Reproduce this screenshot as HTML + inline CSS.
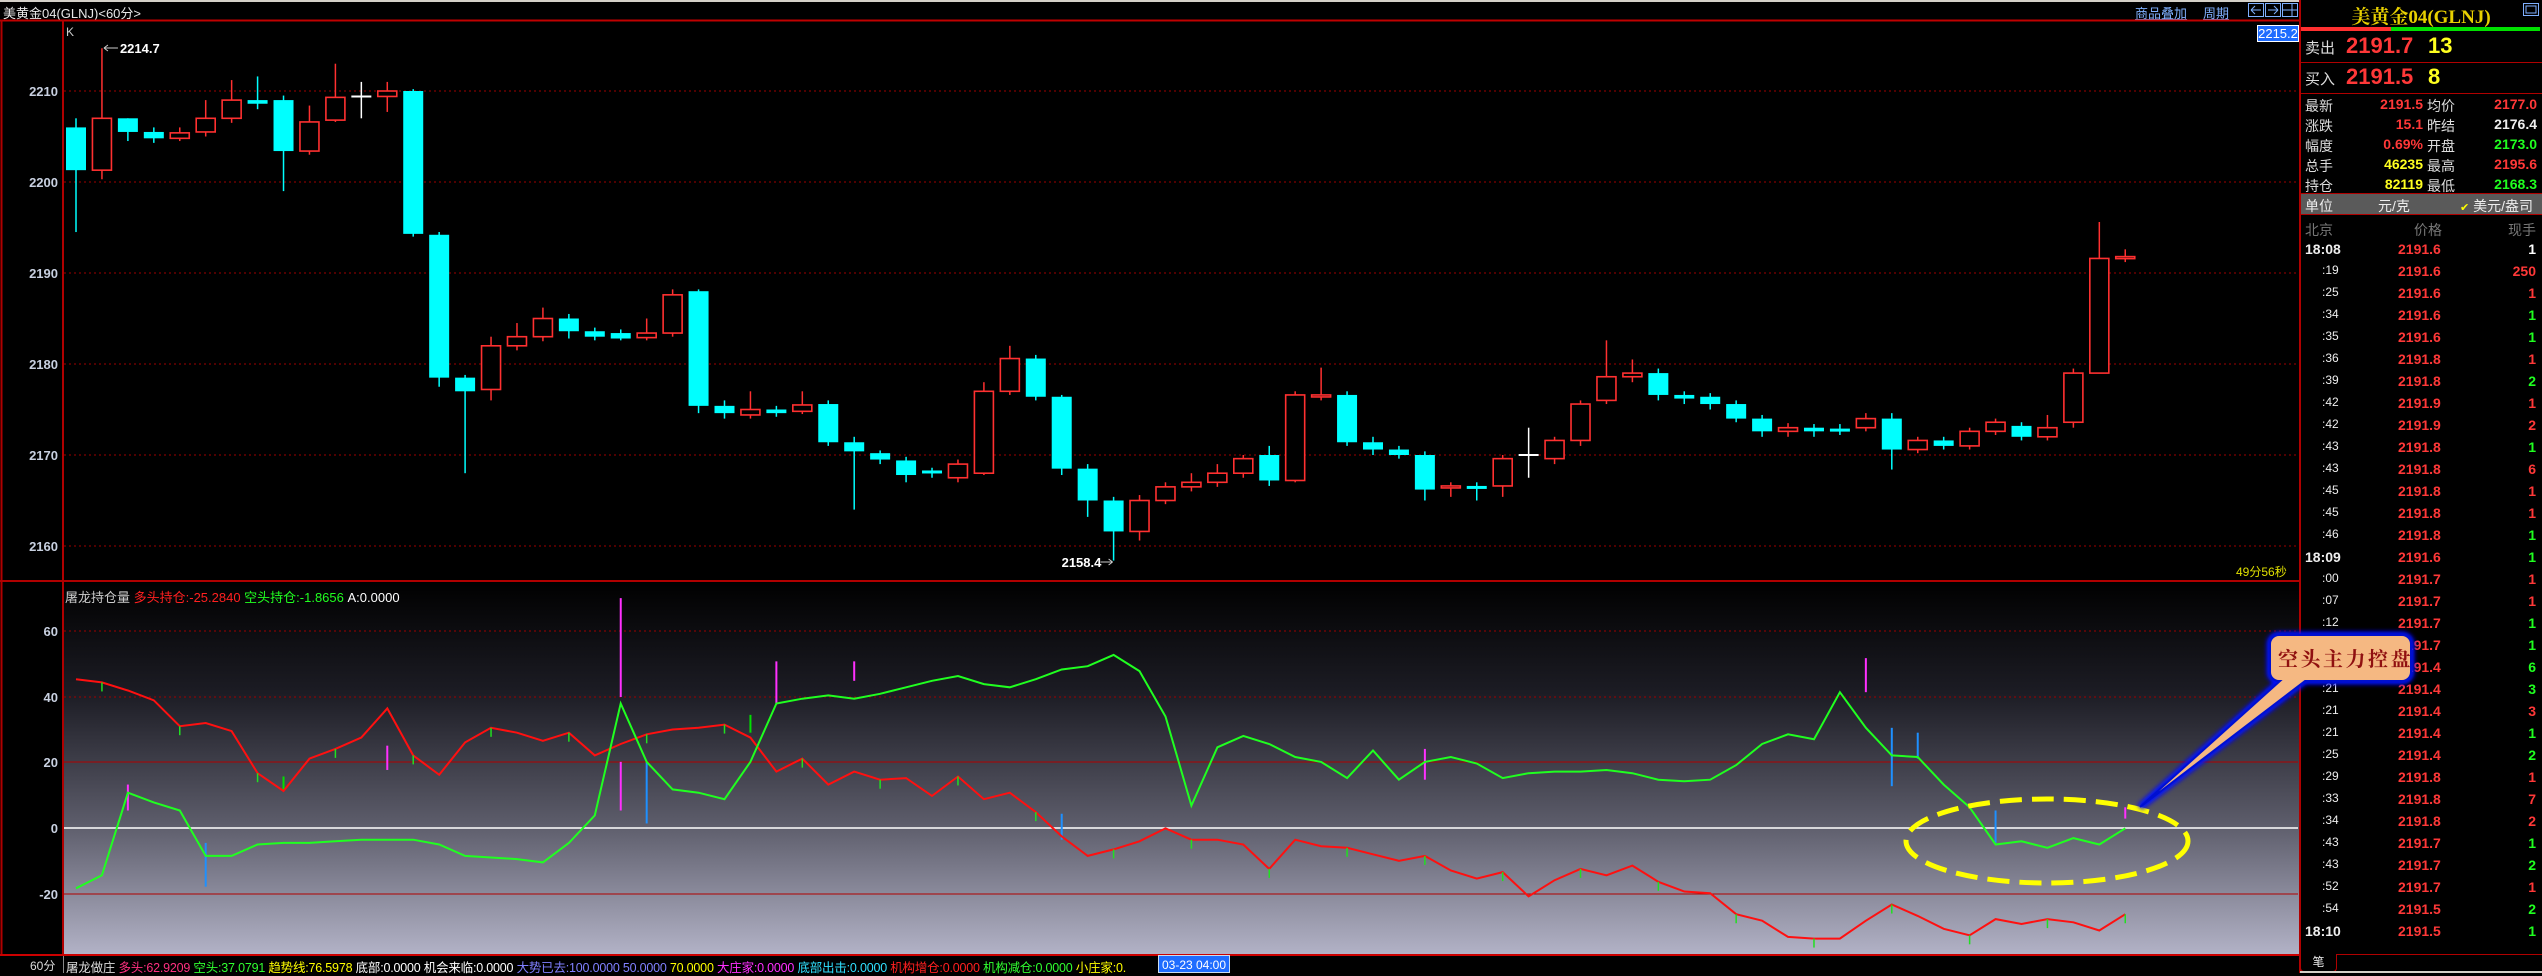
<!DOCTYPE html>
<html><head><meta charset="utf-8">
<style>
*{margin:0;padding:0;box-sizing:border-box}
body{width:2542px;height:973px;background:#000;overflow:hidden;position:relative;font-family:"Liberation Sans","Noto Sans CJK SC",sans-serif;color:#ddd}
.a{position:absolute;white-space:nowrap}
.rp{font-size:14px}
</style></head><body>
<div class="a" style="left:0;top:0;width:2542px;height:2px;background:#d4d0c8"></div>
<div class="a" style="left:3px;top:3px;font-size:13px;color:#e8e8e8">美黄金04(GLNJ)&lt;60分&gt;</div>
<div class="a" style="left:2135px;top:3px;font-size:13px;color:#7fb0ff;text-decoration:underline">商品叠加</div>
<div class="a" style="left:2203px;top:3px;font-size:13px;color:#7fb0ff;text-decoration:underline">周期</div>
<svg class="a" style="left:2248px;top:3px" width="52" height="15"><g fill="none" stroke="#7fb0ff" stroke-width="1"><rect x="0.5" y="0.5" width="15" height="13"/><rect x="17.5" y="0.5" width="15" height="13"/><rect x="34.5" y="0.5" width="15" height="13"/><path d="M3 7h10M3 7l4-4M3 7l4 4M20 7h10M30 7l-4-4M30 7l-4 4M35 7h14M44 1v13"/></g></svg>
<svg class="a" style="left:0;top:0" width="2300" height="973" id="main"></svg>
<div class="a" style="left:2257px;top:25px;width:42px;height:17px;background:#1e6cff;border:1px solid #fff;color:#fff;font-size:13px;line-height:15px;text-align:center">2215.2</div>
<div class="a" style="left:66px;top:25px;font-size:12px;color:#ccc">K</div>
<div class="a" style="left:2236px;top:563px;font-size:12px;color:#e0e000">49分56秒</div>
<div class="a" style="left:65px;top:587px;font-size:13px"><span style="color:#ccc">屠龙持仓量 </span><span style="color:#ff2020">多头持仓:-25.2840 </span><span style="color:#20ff20">空头持仓:-1.8656 </span><span style="color:#fff">A:0.0000</span></div>
<div class="a" style="left:0;top:955px;width:2300px;height:18px;background:#000"></div>
<div class="a" style="left:0;top:954px;width:2300px;height:2px;background:#c00"></div>
<div class="a" style="left:30px;top:957px;font-size:12px;color:#ddd">60分</div>
<div class="a" style="left:63px;top:956px;width:1px;height:17px;background:#888"></div>
<div class="a" style="left:66px;top:957px;font-size:12.5px;letter-spacing:-0.2px"><span style="color:#ddd">屠龙做庄 </span><span style="color:#ff3080">多头:62.9209 </span><span style="color:#30ff30">空头:37.0791 </span><span style="color:#ffff00">趋势线:76.5978 </span><span style="color:#fff">底部:0.0000 机会来临:0.0000 </span><span style="color:#8080ff">大势已去:100.0000 50.0000 </span><span style="color:#ffff00">70.0000 </span><span style="color:#ff30ff">大庄家:0.0000 </span><span style="color:#30e0ff">底部出击:0.0000 </span><span style="color:#ff2020">机构增仓:0.0000 </span><span style="color:#30ff30">机构减仓:0.0000 </span><span style="color:#ffff00">小庄家:0.</span></div>
<div class="a" style="left:1158px;top:955px;width:72px;height:18px;background:#1e6cff;color:#fff;font-size:12px;line-height:18px;text-align:center;border:1px solid #cde">03-23 04:00</div>
<div class="a" style="left:2299px;top:0;width:243px;height:973px;background:#000;border-left:2px solid #b00000"></div>
<div class="a" style="left:2300px;top:2px;width:242px;text-align:center;font-family:'Liberation Serif','Noto Serif CJK SC',serif;font-size:19px;color:#e8d000;font-weight:bold">美黄金04(GLNJ)</div>
<svg class="a" style="left:2523px;top:3px" width="17" height="13"><rect x="0.5" y="0.5" width="15" height="12" fill="none" stroke="#7fb0ff"/><rect x="3" y="3" width="10" height="7" fill="none" stroke="#7fb0ff"/></svg>
<div class="a" style="left:2301px;top:27px;width:90px;height:4px;background:#ff3030"></div>
<div class="a" style="left:2391px;top:27px;width:149px;height:4px;background:#00e000"></div>
<div class="a" style="left:2301px;top:62px;width:241px;height:1px;background:#b00000"></div>
<div class="a" style="left:2301px;top:93px;width:241px;height:1px;background:#b00000"></div>
<div class="a" style="left:2305px;top:37px;font-size:15px;color:#ddd">卖出</div>
<div class="a" style="left:2346px;top:33px;font-size:22px;font-weight:bold;color:#ff3838">2191.7</div>
<div class="a" style="left:2428px;top:33px;font-size:22px;font-weight:bold;color:#ffff20">13</div>
<div class="a" style="left:2305px;top:68px;font-size:15px;color:#ddd">买入</div>
<div class="a" style="left:2346px;top:64px;font-size:22px;font-weight:bold;color:#ff3838">2191.5</div>
<div class="a" style="left:2428px;top:64px;font-size:22px;font-weight:bold;color:#ffff20">8</div>
<div id="stats"></div>
<div class="a" style="left:2301px;top:193px;width:241px;height:22px;background:#5a5a5a;border-top:1px solid #b00000;border-bottom:1px solid #b00000"></div>
<div class="a" style="left:2305px;top:196px;font-size:14px;color:#eee">单位</div>
<div class="a" style="left:2378px;top:196px;font-size:14px;color:#eee">元/克</div>
<div class="a" style="left:2460px;top:196px;font-size:14px;color:#eee"><span style="color:#ffff00;font-size:11px">✔</span> 美元/盎司</div>
<div class="a" style="left:2305px;top:220px;font-size:14px;color:#777">北京</div>
<div class="a" style="left:2414px;top:220px;font-size:14px;color:#777">价格</div>
<div class="a" style="left:2508px;top:220px;font-size:14px;color:#777">现手</div>
<div id="trades"></div>
<div class="a" style="left:2336px;top:954px;width:206px;height:1px;background:#b00000"></div>
<div class="a" style="left:2300px;top:954px;width:37px;height:18px;border:1px solid #b00000;border-top:none;border-radius:0 0 4px 4px;color:#eee;font-size:12px;text-align:center;line-height:17px">笔</div>
<div class="a" style="left:2300px;top:971px;width:242px;height:2px;background:#d4d0c8"></div>
<svg class="a" style="left:2100px;top:620px" width="330" height="240">
<defs><filter id="g" x="-20%" y="-20%" width="140%" height="140%"><feGaussianBlur stdDeviation="2"/></filter></defs>
<path d="M179 15 h123 a9 9 0 0 1 9 9 v28 a9 9 0 0 1 -9 9 h-97 L40 187 L180 61 h-1 a9 9 0 0 1 -9 -9 v-28 a9 9 0 0 1 9 -9z" fill="none" stroke="#0010ff" stroke-width="7" filter="url(#g)"/>
<path d="M179 15 h123 a9 9 0 0 1 9 9 v28 a9 9 0 0 1 -9 9 h-97 L40 187 L180 61 h-1 a9 9 0 0 1 -9 -9 v-28 a9 9 0 0 1 9 -9z" fill="#f5b882" stroke="#0010d0" stroke-width="2"/>
<text x="178" y="46" font-family="Liberation Serif,Noto Serif CJK SC,serif" font-size="20" fill="#901010" font-weight="bold" letter-spacing="2.5">空头主力控盘</text>
</svg>
<script>
var m=document.getElementById('main');var h='';
function Y(p){return 91+(2210-p)*9.1}
h+='<rect x="0" y="581" width="2300" height="373" fill="url(#ig)"/>';
h='<defs><linearGradient id="ig" x1="0" y1="0" x2="0" y2="1"><stop offset="0" stop-color="#000"/><stop offset="0.3" stop-color="#1c1c24"/><stop offset="0.65" stop-color="#5c5c6a"/><stop offset="1" stop-color="#b2b2c6"/></linearGradient></defs>'+h;
h+='<rect x="0" y="581" width="63" height="373" fill="#000"/>';
h+='<line x1="0" y1="20.5" x2="2300" y2="20.5" stroke="#c00000" stroke-width="2"/>';
h+='<line x1="0" y1="581" x2="2300" y2="581" stroke="#b00000" stroke-width="2"/>';
h+='<line x1="63" y1="20" x2="63" y2="954" stroke="#b00000" stroke-width="2"/>';
h+='<line x1="1.5" y1="20" x2="1.5" y2="954" stroke="#b00000" stroke-width="2"/>';
[2210,2200,2190,2180,2170,2160].forEach(function(p){var y=Y(p);h+='<line x1="64" y1="'+y+'" x2="2298" y2="'+y+'" stroke="#a00000" stroke-dasharray="2,3"/>';h+='<text x="58" y="'+(y+5)+'" text-anchor="end" font-size="13" font-weight="bold" fill="#c8d0e0" font-family="Liberation Sans">'+p+'</text>';});
var iy={60:631,40:697,20:762,0:828,'-20':894};
[60,40,20,0,-20].forEach(function(v){var y=iy[v];var st=v==0?'stroke="#fff" stroke-width="1.5"':(v==20||v==-20?'stroke="#b00000" stroke-width="1"':'stroke="#a00000" stroke-dasharray="2,3"');h+='<line x1="64" y1="'+y+'" x2="2298" y2="'+y+'" '+st+'/>';h+='<text x="58" y="'+(y+5)+'" text-anchor="end" font-size="13" font-weight="bold" fill="#c8d0e0" font-family="Liberation Sans">'+v+'</text>';});
var C=[[2206,2201.3,2207,2194.5],[2201.3,2207,2214.7,2200.3],[2207,2205.5,2207,2204.5],[2205.5,2204.8,2206,2204.3],[2204.8,2205.4,2206,2204.5],[2205.5,2207,2209,2205],[2207,2209,2211.2,2206.5],[2209,2208.6,2211.6,2208],[2209,2203.4,2209.5,2199],[2203.4,2206.6,2208.4,2203],[2206.8,2209.3,2213,2206.6],[2209.4,2209.4,2211,2207],[2209.4,2210,2211,2207.7],[2210,2194.3,2210.2,2194],[2194.2,2178.5,2194.5,2177.5],[2178.5,2177,2178.8,2168],[2177.2,2182,2183,2176],[2182,2183,2184.5,2181.5],[2183,2185,2186.2,2182.5],[2185,2183.6,2185.5,2182.8],[2183.6,2183,2184,2182.6],[2183.4,2182.8,2183.8,2182.6],[2182.9,2183.4,2185,2182.6],[2183.4,2187.6,2188.2,2183],[2188,2175.4,2188.2,2174.6],[2175.4,2174.6,2176,2174],[2174.4,2175,2177,2174],[2175,2174.6,2175.4,2174.2],[2174.8,2175.5,2177,2174.5],[2175.6,2171.4,2176,2171],[2171.4,2170.4,2172,2164],[2170.2,2169.5,2170.5,2169],[2169.4,2167.8,2169.8,2167],[2168.3,2168,2168.6,2167.5],[2167.5,2169,2169.5,2167],[2168,2177,2178,2167.8],[2177,2180.6,2182,2176.6],[2180.6,2176.4,2181,2176],[2176.4,2168.5,2176.6,2167.8],[2168.5,2165,2169,2163.2],[2165,2161.6,2165.4,2158.4],[2161.6,2165,2165.6,2160.6],[2165,2166.5,2167,2164.6],[2166.5,2167,2168,2166],[2167,2168,2169,2166.5],[2168,2169.6,2170,2167.5],[2170,2167.2,2171,2166.6],[2167.2,2176.6,2177,2167],[2176.5,2176.6,2179.6,2176],[2176.6,2171.4,2177,2171],[2171.4,2170.6,2172,2170],[2170.6,2170,2171,2169.6],[2170,2166.2,2170.4,2165],[2166.4,2166.6,2167,2165.4],[2166.6,2166.4,2167,2165],[2166.6,2169.6,2170,2165.4],[2170,2170,2173,2167.5],[2169.6,2171.6,2172,2169],[2171.6,2175.6,2176,2171],[2176,2178.6,2182.6,2175.6],[2178.6,2179,2180.5,2178],[2179,2176.6,2179.5,2176],[2176.6,2176.2,2177,2175.6],[2176.4,2175.6,2176.8,2175],[2175.6,2174,2176,2173.6],[2174,2172.6,2174.4,2172],[2172.6,2173,2173.5,2172],[2173,2172.6,2173.4,2172],[2172.9,2172.6,2173.4,2172.2],[2173,2174,2174.6,2172.6],[2174,2170.6,2174.6,2168.4],[2170.6,2171.6,2172,2170.2],[2171.6,2171,2172,2170.6],[2171,2172.6,2173,2170.6],[2172.6,2173.6,2174,2172.2],[2173.2,2172,2173.6,2171.6],[2172,2173,2174.4,2171.6],[2173.6,2179,2179.5,2173],[2179,2191.6,2195.6,2179],[2191.6,2191.8,2192.6,2191.2]];
function X(i){return 76+i*25.94}
C.forEach(function(c,i){var x=X(i),o=c[0],cl=c[1];var up=cl>o+0.05,dn=cl<o-0.05;var col=up?'#ff3030':(dn?'#00ffff':'#ffffff');var t=Y(Math.max(o,cl)),b=Y(Math.min(o,cl));
h+='<line x1="'+x+'" y1="'+Y(c[2])+'" x2="'+x+'" y2="'+Y(c[3])+'" stroke="'+col+'" stroke-width="1.5"/>';
if(!up&&!dn){h+='<line x1="'+(x-10)+'" y1="'+t+'" x2="'+(x+10)+'" y2="'+t+'" stroke="'+col+'" stroke-width="2"/>';}
else if(up){h+='<rect x="'+(x-9.5)+'" y="'+t+'" width="19" height="'+Math.max(b-t,2)+'" fill="#000" stroke="'+col+'" stroke-width="1.6"/>';}
else{h+='<rect x="'+(x-10)+'" y="'+t+'" width="20" height="'+Math.max(b-t,3)+'" fill="'+col+'"/>';}});
h+='<path d="M'+(X(1)+2)+' 48h14m-14 0l4-3m-4 3l4 3" stroke="#ccc" fill="none"/><text x="'+(X(1)+18)+'" y="53" font-size="13" font-weight="bold" fill="#fff" font-family="Liberation Sans">2214.7</text>';
var lx=X(40);h+='<text x="'+(lx-52)+'" y="567" font-size="13" font-weight="bold" fill="#fff" font-family="Liberation Sans">2158.4</text><path d="M'+(lx-13)+' 562h12m0 0l-4-3m4 3l-4 3" stroke="#ccc" fill="none"/>';
var R=[419,421,426,432,448,446,451,477,488,468,462,455,437,466,478,458,449,452,457,452,466,459,453,450,449,447,455,476,468,484,476,481,480,491,479,493,489,501,516,528,524,519,511,518,518,521,536,518,522,523,527,531,528,537,542,538,553,543,536,540,534,544,550,551,564,568,578,579,579,568,558,565,573,577,567,570,567,569,574,564];
var G=[548,540,489,495,500,528,528,521,520,520,519,518,518,518,521,528,529,530,532,520,503,434,470,487,489,493,470,434,431,429,431,428,424,420,417,422,424,419,413,411,404,414,442,497,461,454,459,467,470,480,463,481,470,467,471,480,477,476,476,475,477,481,482,481,472,459,453,456,427,449,466,467,484,498,521,519,523,517,521,511];
var bars=[[5,520,547,'#1e90ff'],[21,369,430,'#ff30ff'],[21,470,500,'#ff30ff'],[22,470,508,'#1e90ff'],[27,408,434,'#ff30ff'],[30,408,420,'#ff30ff'],[2,484,500,'#ff30ff'],[12,460,475,'#ff30ff'],[52,462,481,'#ff30ff'],[69,406,427,'#ff30ff'],[70,449,485,'#1e90ff'],[71,452,468,'#1e90ff'],[74,500,520,'#1e90ff'],[79,498,505,'#ff30ff'],[8,479,488,'#00e000'],[26,441,452,'#00e000'],[38,502,518,'#1e90ff']];
bars.forEach(function(b){h+='<line x1="'+X(b[0])+'" y1="'+(b[1]*1.621)+'" x2="'+X(b[0])+'" y2="'+(b[2]*1.621)+'" stroke="'+b[3]+'" stroke-width="2"/>';});
function pl(a,col){var p=a.map(function(v,i){return X(i).toFixed(1)+','+(v*1.621).toFixed(1)}).join(' ');return '<polyline points="'+p+'" fill="none" stroke="'+col+'" stroke-width="2"/>';}
h+=pl(R,'#ff1010');h+=pl(G,'#20ff20');
R.forEach(function(v,i){if(i%3==1)h+='<line x1="'+X(i)+'" y1="'+(v*1.621)+'" x2="'+X(i)+'" y2="'+(v*1.621+9)+'" stroke="#20e020" stroke-width="1.5"/>';});
h+='<ellipse cx="2047" cy="841" rx="141" ry="42" fill="none" stroke="#ffff00" stroke-width="5" stroke-dasharray="22,10"/>';
m.innerHTML=h;
var st=[['最新','2191.5','#ff3838','均价','2177.0','#ff3838'],['涨跌','15.1','#ff3838','昨结','2176.4','#eee'],['幅度','0.69%','#ff3838','开盘','2173.0','#20ff20'],['总手','46235','#ffff20','最高','2195.6','#ff3838'],['持仓','82119','#ffff20','最低','2168.3','#20ff20']];
var s='';st.forEach(function(r,i){var y=96+i*20;s+='<div class="a rp" style="left:2305px;top:'+y+'px;color:#ddd">'+r[0]+'</div><div class="a rp" style="left:2380px;width:43px;text-align:right;top:'+y+'px;color:'+r[2]+';font-weight:bold">'+r[1]+'</div><div class="a rp" style="left:2427px;top:'+y+'px;color:#ddd">'+r[3]+'</div><div class="a rp" style="left:2480px;width:57px;text-align:right;top:'+y+'px;color:'+r[5]+';font-weight:bold">'+r[4]+'</div>';});
document.getElementById('stats').innerHTML=s;
var T=[['18:08','2191.6','1','w'],[':19','2191.6','250','r'],[':25','2191.6','1','r'],[':34','2191.6','1','g'],[':35','2191.6','1','g'],[':36','2191.8','1','r'],[':39','2191.8','2','g'],[':42','2191.9','1','r'],[':42','2191.9','2','r'],[':43','2191.8','1','g'],[':43','2191.8','6','r'],[':45','2191.8','1','r'],[':45','2191.8','1','r'],[':46','2191.8','1','g'],['18:09','2191.6','1','g'],[':00','2191.7','1','r'],[':07','2191.7','1','r'],[':12','2191.7','1','g'],[':17','2191.7','1','g'],[':21','2191.4','6','g'],[':21','2191.4','3','g'],[':21','2191.4','3','r'],[':21','2191.4','1','g'],[':25','2191.4','2','g'],[':29','2191.8','1','r'],[':33','2191.8','7','r'],[':34','2191.8','2','r'],[':43','2191.7','1','g'],[':43','2191.7','2','g'],[':52','2191.7','1','r'],[':54','2191.5','2','g'],['18:10','2191.5','1','g']];
var cm={w:'#fff',r:'#ff3838',g:'#20ff20'};var t='';
T.forEach(function(r,i){var y=241+i*22;var big=r[0].length>3;t+='<div class="a" style="left:'+(big?2305:2322)+'px;top:'+y+'px;font-size:'+(big?14:12)+'px;color:#eee;font-weight:'+(big?'bold':'normal')+'">'+r[0]+'</div><div class="a" style="left:2398px;top:'+y+'px;font-size:14px;color:#ff3838;font-weight:bold">'+r[1]+'</div><div class="a" style="left:2490px;width:46px;text-align:right;top:'+y+'px;font-size:14px;font-weight:bold;color:'+cm[r[3]]+'">'+r[2]+'</div>';});
document.getElementById('trades').innerHTML=t;
</script>
</body></html>
